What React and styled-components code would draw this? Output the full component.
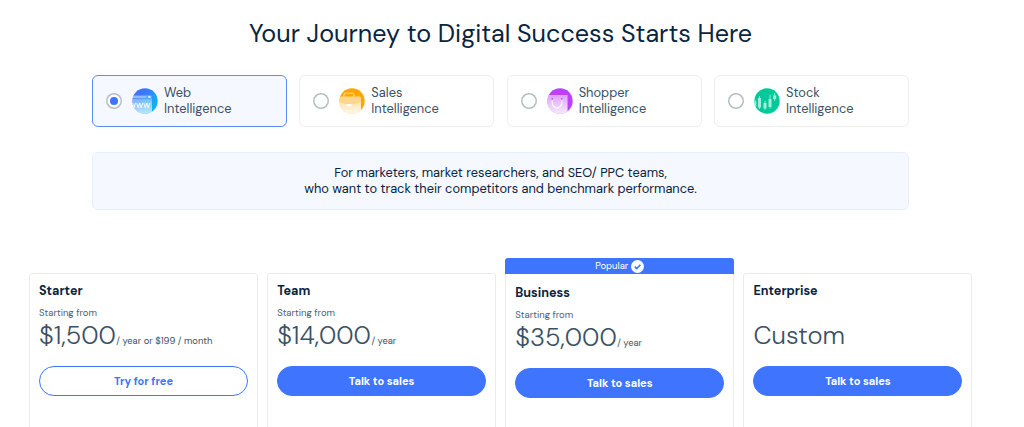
import React, { useState } from 'react';
import styled, { createGlobalStyle } from 'styled-components';

const products = [
  { id: 'web', name: 'Web' },
  { id: 'sales', name: 'Sales' },
  { id: 'shopper', name: 'Shopper' },
  { id: 'stock', name: 'Stock' },
];

const plans = [
  { name: 'Starter', price: '$1,500', period: '/ year or $199 / month', cta: 'Try for free', outlined: true },
  { name: 'Team', price: '$14,000', period: '/ year', cta: 'Talk to sales' },
  { name: 'Business', price: '$35,000', period: '/ year', cta: 'Talk to sales', popular: true },
  { name: 'Enterprise', price: 'Custom', cta: 'Talk to sales' },
];

const ProductIcon = ({ id }) => (
  <IconSvg viewBox="0 0 26 26">
    <defs>
      <clipPath id={`clip-${id}`}>
        <circle cx="13" cy="13" r="12.7" />
      </clipPath>
      <linearGradient id="webBg" x1="0" y1="0" x2="1" y2="1">
        <stop offset="0.3" stopColor="#3e74fe" />
        <stop offset="0.75" stopColor="#12b1ee" />
      </linearGradient>
      <linearGradient id={`fade-${id}`} x1="0" y1="0" x2="0" y2="1">
        <stop offset="0" stopColor="#fff" stopOpacity="0.3" />
        <stop offset="1" stopColor="#fff" stopOpacity="0.85" />
      </linearGradient>
    </defs>
    <g clipPath={`url(#clip-${id})`}>
      {id === 'web' && (
        <>
          <rect width="26" height="26" fill="url(#webBg)" />
          <path d="M0 7h18.5a1.5 1.5 0 0 1 1.5 1.5V26H0z" fill="#9fd6ff" opacity="0.35" />
          <path d="M0 11h20v15H0z" fill={`url(#fade-${id})`} opacity="0.75" />
          <path d="M1 9h13.5" stroke="#d9e8ff" strokeWidth="1.1" opacity="0.8" />
          <path d="M16.2 9h2.4" stroke="#fff" strokeWidth="1.4" />
          <path
            d="M-2.5 15l1.5 4.8 1.5-4.8 1.5 4.8 1.5-4.8M4.7 15l1.5 4.8 1.5-4.8 1.5 4.8 1.5-4.8M11.8 15l1.5 4.8 1.5-4.8 1.5 4.8 1.5-4.8"
            fill="none"
            stroke="#fff"
            strokeWidth="0.9"
          />
        </>
      )}
      {id === 'sales' && (
        <>
          <rect width="26" height="26" fill="#ffa600" />
          <path d="M5 8.5v-2a1.300 1.300 0 0 1 1.300-1.300h7.400A1.300 1.300 0 0 1 15 6.500v2" fill="none" stroke="#ffe3ae" strokeWidth="1" />
          <path d="M0 8.500h20.500a1.500 1.500 0 0 1 1.500 1.500v16H0z" fill="#fff" opacity="0.55" />
          <path d="M0 14q11 5 22 0v12H0z" fill={`url(#fade-${id})`} />
          <rect x="7.500" y="16" width="5" height="2.200" rx="1" fill="#fff" />
        </>
      )}
      {id === 'shopper' && (
        <>
          <rect width="26" height="26" fill="#be40ff" />
          <path d="M0 7h20.500v19H0z" fill="#fff" opacity="0.3" />
          <path d="M0 7h20.500v19H0z" fill={`url(#fade-${id})`} />
          <path d="M5.200 12.500V15a4.800 4.800 0 0 0 9.600 0v-2.500" fill="none" stroke="#fff" strokeWidth="1.200" />
          <circle cx="5.200" cy="10.800" r="0.800" fill="#b33cf2" />
          <circle cx="14.800" cy="10.800" r="0.800" fill="#b33cf2" />
        </>
      )}
      {id === 'stock' && (
        <>
          <rect width="26" height="26" fill="#00ca9a" />
          <path d="M1.200 12v8M5.500 8v13M11 13v9M16 6.500v14M20.700 5v8" stroke="#a6eddb" strokeWidth="0.900" />
          <path d="M0 13.500h2.300v5H0zM4 10h3v9.500H4zM9.500 15h3v5.500h-3zM14.500 11h3v8h-3zM19.200 7.500h3V11h-3z" fill="#a6eddb" />
        </>
      )}
    </g>
  </IconSvg>
);

const App = () => {
  const [selected, setSelected] = useState('web');

  return (
    <Page>
      <GlobalStyle />
      <Title>Your Journey to Digital Success Starts Here</Title>
      <ProductList role="radiogroup">
        {products.map((product) => (
          <ProductCard
            key={product.id}
            role="radio"
            aria-checked={selected === product.id}
            $active={selected === product.id}
            onClick={() => setSelected(product.id)}
          >
            <Radio>{selected === product.id && <RadioDot />}</Radio>
            <ProductIcon id={product.id} />
            <ProductName>
              {product.name}
              <br />
              Intelligence
            </ProductName>
          </ProductCard>
        ))}
      </ProductList>
      <Banner>
        <BannerLine>For marketers, market researchers, and SEO/ PPC teams,</BannerLine>
        <BannerLine>who want to track their competitors and benchmark performance.</BannerLine>
      </Banner>
      <PlanList>
        {plans.map((plan) => (
          <PlanColumn key={plan.name}>
            {plan.popular && (
              <PopularBar>
                Popular
                <CheckSvg viewBox="0 0 13 13">
                  <circle cx="6.5" cy="6.5" r="6.5" fill="#fff" />
                  <path d="M3.7 6.6l2 2 3.700-3.800" fill="none" stroke="#3e74fe" strokeWidth="1.5" />
                </CheckSvg>
              </PopularBar>
            )}
            <PlanCard $popular={plan.popular}>
              <PlanName>{plan.name}</PlanName>
              <StartingFrom>{plan.period && 'Starting from'}</StartingFrom>
              <PriceRow>
                <Price>{plan.price}</Price>
                {plan.period && <Period>{plan.period}</Period>}
              </PriceRow>
              <PlanButton $outlined={plan.outlined}>{plan.cta}</PlanButton>
            </PlanCard>
          </PlanColumn>
        ))}
      </PlanList>
    </Page>
  );
};

// Styled components
const GlobalStyle = createGlobalStyle`
  * {
    box-sizing: border-box;
  }

  body {
    margin: 0;
    background: #fff;
    overflow: hidden;
  }
`;

const Page = styled.main`
  width: 1024px;
  height: 427px;
  overflow: hidden;
  padding: 16px 0 0 29px;
  font-family: 'DM Sans', Inter, sans-serif;
  color: #092540;
`;

const Title = styled.h1`
  width: 943px;
  margin: 0;
  font-size: 25.15px;
  font-weight: 400;
  line-height: 36px;
  text-align: center;
  white-space: nowrap;
`;

const ProductList = styled.div`
  display: grid;
  grid-template-columns: repeat(4, 195px);
  justify-content: space-between;
  width: 817px;
  margin: 23px 0 0 63px;
`;

const ProductCard = styled.div`
  display: flex;
  align-items: center;
  height: 52px;
  padding-left: 13px;
  border: 1px solid ${({ $active }) => ($active ? '#5c8aff' : '#eceef0')};
  border-radius: 6px;
  background: ${({ $active }) => ($active ? '#f5f9ff' : '#fff')};
  cursor: pointer;
`;

const Radio = styled.span`
  display: flex;
  align-items: center;
  justify-content: center;
  width: 16px;
  height: 16px;
  border-radius: 50%;
  background: #fff;
  box-shadow: inset 0 0 0 1.5px #b6bec6;
`;

const RadioDot = styled.span`
  width: 8px;
  height: 8px;
  border-radius: 50%;
  background: #3e74fe;
`;

const IconSvg = styled.svg`
  width: 26px;
  height: 26px;
  margin: 0 6px 0 10px;
`;

const ProductName = styled.span`
  color: #3a5166;
  font-size: 12.85px;
  line-height: 16px;
`;

const Banner = styled.section`
  display: flex;
  flex-direction: column;
  align-items: center;
  justify-content: center;
  width: 817px;
  height: 58px;
  margin: 25px 0 0 63px;
  border: 1px solid #e6eeff;
  border-radius: 6px;
  background: #f5f8fe;
`;

const BannerLine = styled.span`
  font-size: 12.8px;
  line-height: 16px;
  white-space: nowrap;
`;

const PlanList = styled.div`
  display: grid;
  grid-template-columns: repeat(4, 229px);
  align-items: end;
  gap: 9.15px;
  margin-top: 48px;
`;

const PlanColumn = styled.div`
  display: flex;
  flex-direction: column;
`;

const PopularBar = styled.div`
  display: flex;
  align-items: center;
  justify-content: center;
  gap: 3px;
  height: 16px;
  border-radius: 3px 3px 0 0;
  background: #3e74fe;
  color: #fff;
  font-size: 9.5px;
`;

const CheckSvg = styled.svg`
  width: 13px;
  height: 13px;
`;

const PlanCard = styled.article`
  height: ${({ $popular }) => ($popular ? 199 : 200)}px;
  padding: ${({ $popular }) => ($popular ? 11 : 9)}px 9px 0;
  border: 1px solid #e9ebed;
  border-width: ${({ $popular }) => ($popular ? '0 1px' : '1px')};
  border-radius: ${({ $popular }) => ($popular ? 0 : '3px')};
`;

const PlanName = styled.h2`
  margin: 0;
  font-size: 12.6px;
  font-weight: 700;
  line-height: 16px;
`;

const StartingFrom = styled.p`
  height: 12px;
  margin: 8px 0 0;
  color: #4d6175;
  font-size: 9.5px;
  line-height: 12px;
`;

const PriceRow = styled.div`
  display: flex;
  align-items: baseline;
  height: 32px;
  color: #3a5166;
  line-height: 34px;
  white-space: nowrap;
`;

const Price = styled.span`
  font-size: 25.5px;
  font-weight: 300;
`;

const Period = styled.span`
  margin-left: 0.5px;
  font-size: 9.4px;
`;

const PlanButton = styled.button`
  display: block;
  width: 209px;
  height: 29.5px;
  margin-top: 15px;
  padding: 0;
  border: 1px solid #3e74fe;
  border-radius: 15px;
  background: ${({ $outlined }) => ($outlined ? '#fff' : '#3e74fe')};
  color: ${({ $outlined }) => ($outlined ? '#3e74fe' : '#fff')};
  font-family: inherit;
  font-size: 11px;
  font-weight: 700;
`;

export default App;
